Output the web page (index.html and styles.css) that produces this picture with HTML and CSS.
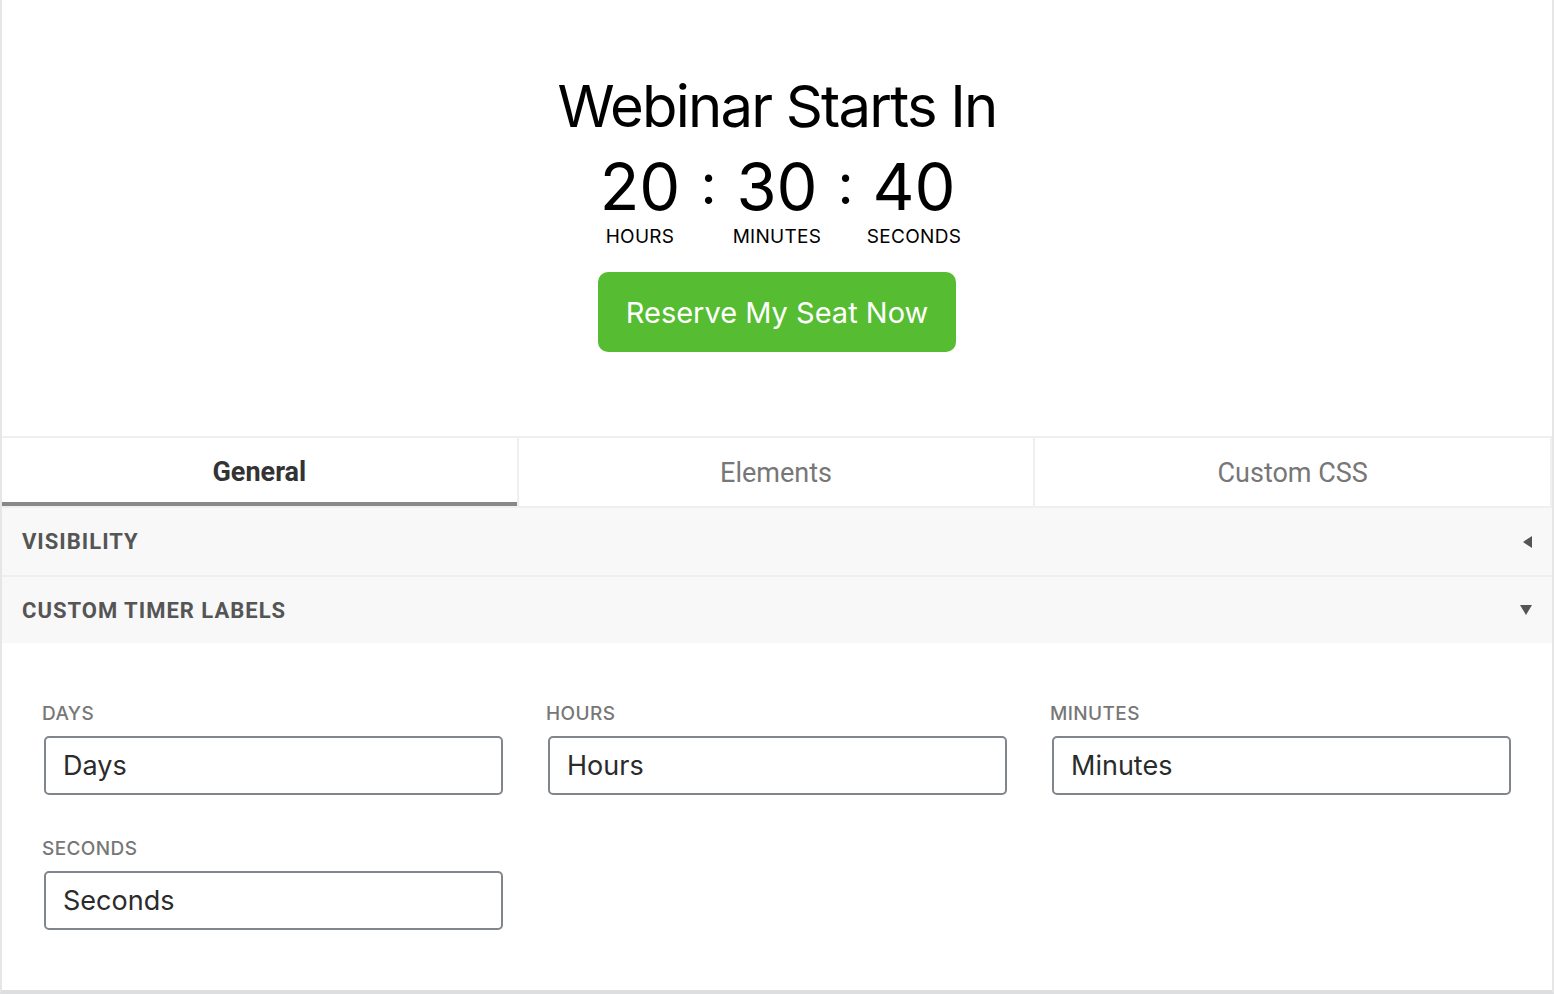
FILE: index.html
```html
<!DOCTYPE html>
<html lang="en">
<head>
  <meta charset="UTF-8">
  <meta name="viewport" content="width=device-width, initial-scale=1.0">
  <title>Countdown Timer</title>
  <link rel="stylesheet" href="styles.css">
</head>
<body>
  <div class="frame">
    <div class="preview">
      <h1 class="title">Webinar Starts In</h1>
      <div class="timer">
        <div class="unit">
          <span class="num">20</span>
          <span class="unit-label">HOURS</span>
        </div>
        <span class="sep">:</span>
        <div class="unit">
          <span class="num">30</span>
          <span class="unit-label">MINUTES</span>
        </div>
        <span class="sep">:</span>
        <div class="unit">
          <span class="num">40</span>
          <span class="unit-label">SECONDS</span>
        </div>
      </div>
      <button class="cta">Reserve My Seat Now</button>
    </div>

    <div class="tabs">
      <div class="tab tab-active">General</div>
      <div class="tab">Elements</div>
      <div class="tab">Custom CSS</div>
    </div>

    <div class="section">
      <span class="section-title">VISIBILITY</span>
      <span class="arrow arrow-left"></span>
    </div>
    <div class="section section-open">
      <span class="section-title">CUSTOM TIMER LABELS</span>
      <span class="arrow arrow-down"></span>
    </div>

    <div class="fields">
      <label class="field">
        <span class="field-label">DAYS</span>
        <input class="input" type="text" value="Days">
      </label>
      <label class="field">
        <span class="field-label">HOURS</span>
        <input class="input" type="text" value="Hours">
      </label>
      <label class="field">
        <span class="field-label">MINUTES</span>
        <input class="input" type="text" value="Minutes">
      </label>
      <label class="field">
        <span class="field-label">SECONDS</span>
        <input class="input" type="text" value="Seconds">
      </label>
    </div>
  </div>
</body>
</html>
```

FILE: styles.css
```css
* {
  box-sizing: border-box;
}
body {
  margin: 0;
  background: #fff;
  font-family: Inter, "Helvetica Neue", Arial, sans-serif;
}
.frame {
  height: 994px;
  border-left: 2px solid #e6e6e6;
  border-right: 2px solid #e6e6e6;
  border-bottom: 4px solid #dcdee0;
}
.preview {
  display: flex;
  flex-direction: column;
  align-items: center;
  height: 436px;
  padding-top: 70px;
}
.title {
  margin: 0;
  font-size: 58px;
  font-weight: 400;
  line-height: 72px;
  color: #000;
  letter-spacing: -1.8px;
}
.timer {
  display: flex;
  align-items: flex-start;
  margin-top: 10px;
  color: #000;
}
.unit {
  display: flex;
  flex-direction: column;
  align-items: center;
  width: 110px;
}
.num {
  font-size: 65px;
  line-height: 70px;
}
.unit-label {
  margin-top: 4px;
  font-size: 19px;
  line-height: 22px;
  letter-spacing: 0.3px;
}
.sep {
  width: 27px;
  text-align: center;
  font-size: 56px;
  line-height: 64px;
}
.cta {
  margin-top: 24px;
  width: 358px;
  height: 80px;
  border: none;
  border-radius: 10px;
  background: #56bc31;
  color: #fff;
  font-family: Inter, "Helvetica Neue", Arial, sans-serif;
  font-size: 29px;
  cursor: pointer;
}
.tabs {
  display: flex;
  height: 72px;
  border-top: 2px solid #efefef;
  border-bottom: 2px solid #efefef;
}
.tab {
  display: flex;
  flex: 1;
  align-items: center;
  justify-content: center;
  padding-top: 2px;
  font-family: Roboto, Arial, sans-serif;
  font-size: 27px;
  color: #777;
}
.tab + .tab {
  border-left: 2px solid #efefef;
}
.tab:last-child {
  border-right: 2px solid #efefef;
}
.tab-active {
  font-weight: 700;
  color: #333;
  border-bottom: 4px solid #888;
  padding-top: 3px;
}
.section {
  display: flex;
  align-items: center;
  justify-content: space-between;
  height: 69px;
  padding: 0 20px 0 20px;
  background: #f8f8f8;
  border-bottom: 2px solid #efefef;
}
.section-open {
  height: 66px;
  border-bottom: none;
}
.section-title {
  font-family: Roboto, Arial, sans-serif;
  font-size: 22px;
  font-weight: 700;
  letter-spacing: 1px;
  color: #555;
}
.arrow {
  width: 0;
  height: 0;
}
.arrow-left {
  border-top: 6px solid transparent;
  border-bottom: 6px solid transparent;
  border-right: 9px solid #555;
}
.arrow-down {
  border-left: 6px solid transparent;
  border-right: 6px solid transparent;
  border-top: 10px solid #555;
}
.fields {
  display: grid;
  grid-template-columns: repeat(3, 459px);
  column-gap: 45px;
  row-gap: 42px;
  padding: 59px 0 0 42px;
}
.field {
  display: flex;
  flex-direction: column;
}
.field-label {
  margin: 0 0 10px -2px;
  font-size: 19px;
  line-height: 24px;
  font-weight: 500;
  letter-spacing: 0.4px;
  color: #777;
}
.input {
  height: 59px;
  padding: 0 17px;
  border: 2px solid #80868c;
  border-radius: 5px;
  font-family: Inter, "Helvetica Neue", Arial, sans-serif;
  font-size: 27px;
  color: #2b2b2b;
  outline: none;
}
```
